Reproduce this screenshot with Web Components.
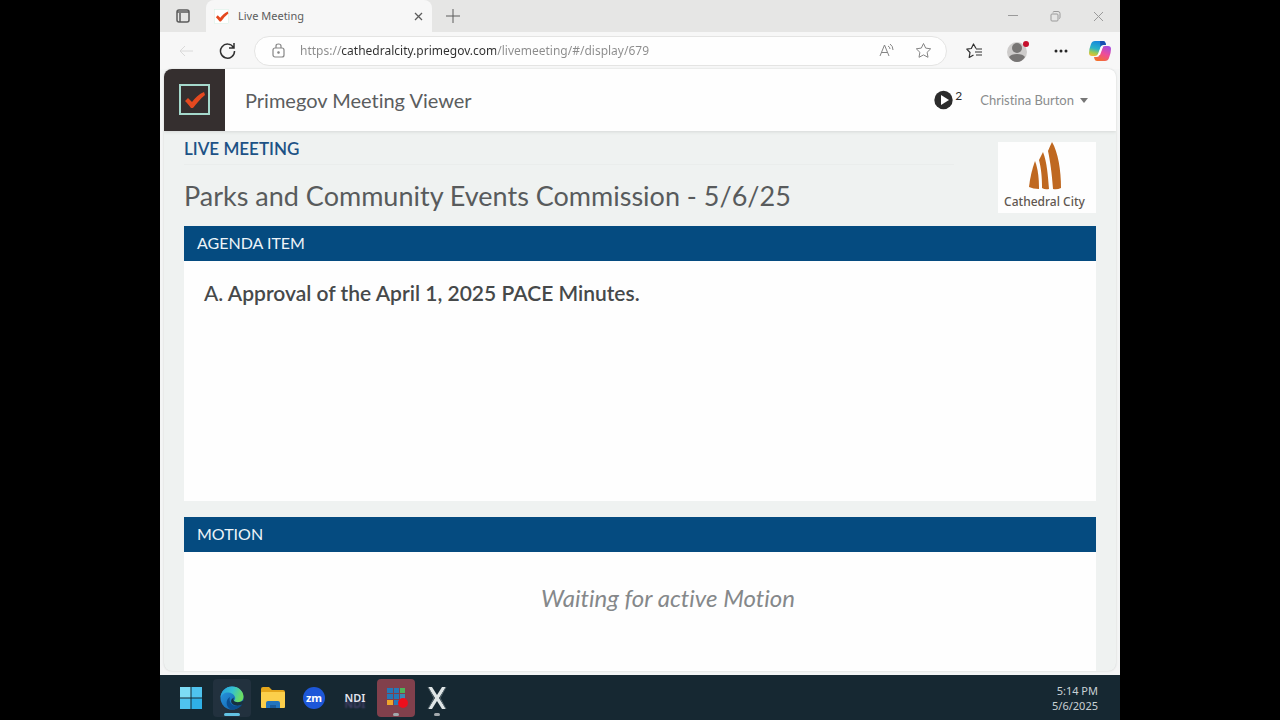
<!DOCTYPE html>
<html lang="en">
<head>
<meta charset="utf-8">
<meta name="viewport" content="width=device-width, initial-scale=1">
<title>Live Meeting</title>
<style>
  html, body { height: 100%; }
  body {
    margin: 0;
    background: #000;
    overflow: hidden;
    --ui: "Noto Sans", "Open Sans", sans-serif;
    --app: Lato, "Open Sans", sans-serif;
    --blue: #054b80;
    font-family: var(--app);
    font-variant-ligatures: none;
  }
</style>
</head>
<body>

<desktop-screen>
  <browser-tabs>Live Meeting</browser-tabs>
  <browser-toolbar url="https://cathedralcity.primegov.com/livemeeting/#/display/679"></browser-toolbar>
  <meeting-viewer>
    <viewer-header slot="header" user="Christina Burton" count="2">Primegov Meeting Viewer</viewer-header>
    <meeting-title label="LIVE MEETING">
      Parks and Community Events Commission - 5/6/25
      <city-logo slot="logo">Cathedral City</city-logo>
    </meeting-title>
    <meeting-panel heading="AGENDA ITEM">
      <agenda-item number="A.">Approval of the April 1, 2025 PACE Minutes.</agenda-item>
    </meeting-panel>
    <meeting-panel heading="MOTION">
      <motion-status>Waiting for active Motion</motion-status>
    </meeting-panel>
  </meeting-viewer>
  <task-bar slot="taskbar" time="5:14 PM" date="5/6/2025">
    <task-app label="Start">
      <svg viewBox="0 0 24 24"><g fill="#4fc3ee"><path d="M1 1h10.500v10.500H1z" fill="#7ddcf5"/><path d="M12.500 1H23v10.500H12.500z"/><path d="M1 12.500h10.500V23H1z"/><path d="M12.500 12.500H23V23H12.500z" fill="#2fb0e6"/></g></svg>
    </task-app>
    <task-app label="Microsoft Edge" state="active">
      <svg viewBox="0 0 24 24">
        <defs>
          <linearGradient id="edge-top" x1="0" y1="0" x2="1" y2="0.300"><stop offset="0" stop-color="#249be0"/><stop offset="0.550" stop-color="#35c1cf"/><stop offset="1" stop-color="#6bdd62"/></linearGradient>
          <linearGradient id="edge-low" x1="0" y1="0" x2="1" y2="1"><stop offset="0" stop-color="#2b9be4"/><stop offset="1" stop-color="#0c59a4"/></linearGradient>
        </defs>
        <circle cx="12" cy="12" r="11.500" fill="url(#edge-low)"/>
        <path d="M.5 12C1 5 6 .5 12 .5c7 0 11.500 5 11.500 10 0 4-3 6-6 6-2.500 0-4-1-3.500-2 1-1 1.500-2 1-3.500C14 8 11 6.500 8 6.500 4.500 6.500 1.500 8.500.5 12z" fill="url(#edge-top)"/>
        <path d="M10 11c-1.500 4 1 8.500 6 9 2.500.2 4.500-.5 6-1.500l-1 1.500c-3 3-7 4-10.500 3.200C6 21 5 14 10 11z" fill="#0b4f91"/>
        <path d="M14 11.500c-.5 1-.8 2-.3 3 1.300 2 5.500 2.500 9 .3l.6 1.200c-.3 1.200-1 2-1.300 2.500-3 1.700-7 1.500-9.500-.5-2-1.600-2-5 1.500-6.500z" fill="#173142"/>
      </svg>
    </task-app>
    <task-app label="File Explorer">
      <svg viewBox="0 0 24 24"><path d="M0 3q0-2 2-2h6l3 3h11q2 0 2 2v4H0z" fill="#e5a61b"/><path d="M0 7q0-1 1-1h22q1 0 1 1v14q0 1-1 1H1q-1 0-1-1z" fill="#fccf4b"/><path d="M5 22v-5q0-2 2-2h10q2 0 2 2v5z" fill="#2374bd"/><path d="M9 19h6v3H9z" fill="#1a5b9c"/></svg>
    </task-app>
    <task-app label="Zoom"><span class="zoom">zm</span></task-app>
    <task-app label="NDI Tools"><span class="ndi">NDI</span></task-app>
    <task-app label="Recorder" state="alert">
      <svg viewBox="0 0 24 24"><g fill="#2678b8"><path d="M3 2h6v5H3zM10 2h5v5h-5zM3 8h6v5H3zM10 8h5v5h-5zM10 14h5v5h-5z"/></g><path d="M16 2h5v5h-5z" fill="#4eb35a"/><path d="M16 8h5v5h-5z" fill="#3b89b5"/><path d="M3 14h6v5H3z" fill="#f0a52c"/><circle cx="19" cy="17" r="5" fill="#ed0f1d"/></svg>
    </task-app>
    <task-app label="X Capture" state="running">
      <svg viewBox="0 0 24 24"><path d="M3 1h4l5 8 5-8h4l-7 11 7 11h-4l-5-8-5 8H3l7-11z" fill="#dfe5e6"/><path d="M3 1l6 11-6 11M21 1l-6 11 6 11" fill="none" stroke="#56666d"/></svg>
    </task-app>
  </task-bar>
</desktop-screen>

<script>
  (function meetingPage() {
    'use strict';

    const define = (name, render) => {
      customElements.define(name, class extends HTMLElement {
        constructor() {
          super();
          this.attachShadow({ mode: 'open' });
        }

        connectedCallback() {
          this.shadowRoot.innerHTML = render(this);
        }
      });
    };

    const buttonReset = `
      button {
        display: grid;
        place-items: center;
        padding: 0;
        border: 0;
        background: none;
        color: inherit;
        font: inherit;
      }
      svg { display: block; fill: none; stroke: currentColor; }
      svg.solid { stroke: none; }
    `;

    const check = `<path d="M3 13l3-3 4 4C13 10 17 6 22 4l1 3c-5 4-8 8-12 13H9c-2-3-4-5-6-7z" fill="#e5491f" stroke="none"/>`;

    define('desktop-screen', () => `
      <style>
        :host {
          display: flex;
          flex-direction: column;
          height: 100vh;
          max-width: 100%;
          aspect-ratio: 4 / 3;
          margin: 0 auto;
          background: #f4f5f5;
          overflow: hidden;
        }
      </style>
      <slot></slot>
      <slot name="taskbar"></slot>
    `);

    define('browser-tabs', () => `
      <style>
        ${buttonReset}
        :host {
          display: flex;
          flex: none;
          height: 32px;
          background: #e6e6e5;
          color: #5c5c5c;
          font: 11px/16px var(--ui);
        }
        .menu { width: 46px; }
        .tab {
          display: flex;
          align-items: center;
          gap: 9px;
          box-sizing: border-box;
          width: 226px;
          padding: 0 6px 0 8px;
          border-radius: 8px 8px 0 0;
          background: #f7f7f7;
        }
        .favicon { background: #fff; }
        .name { flex: 1; }
        .tab button { width: 16px; height: 16px; }
        .new { width: 42px; }
        .window { display: flex; margin-left: auto; color: #9a9a9a; }
        .window button { width: 43px; }
      </style>
      <button class="menu" aria-label="Tab actions"><svg width="14" height="14" stroke-width="1.500"><rect x="1" y="1" width="12" height="12" rx="2"/><path d="M1 3h12M4 4v9"/></svg></button>
      <div class="tab">
        <svg class="favicon" width="15" height="15" viewBox="0 0 24 24"><rect x="1" y="1" width="22" height="22" stroke="#d9f0e6"/>${check}</svg>
        <span class="name"><slot></slot></span>
        <button aria-label="Close tab"><svg width="9" height="9" stroke-width="1.300"><path d="M1 1l7 7M8 1L1 8"/></svg></button>
      </div>
      <button class="new" aria-label="New tab"><svg width="14" height="14"><path d="M7 0v14M0 7h14"/></svg></button>
      <div class="window">
        <button aria-label="Minimize"><svg width="10" height="10"><path d="M0 4.500h10"/></svg></button>
        <button aria-label="Restore"><svg width="11" height="11"><rect x="1" y="3" width="7" height="7" rx="1"/><path d="M3 1.500q0-1 1-1h4q2 0 2 2v4q0 1-1 1"/></svg></button>
        <button aria-label="Close"><svg width="11" height="11"><path d="M1 1l9 9M10 1l-9 9"/></svg></button>
      </div>
    `);

    define('browser-toolbar', (el) => `
      <style>
        ${buttonReset}
        :host {
          display: flex;
          align-items: center;
          flex: none;
          height: 37px;
          background: #f7f7f7;
          color: #303030;
        }
        .back { width: 46px; padding-left: 6px; color: #dadada; }
        .reload { width: 42px; }
        .address {
          display: flex;
          align-items: center;
          flex: 1;
          box-sizing: border-box;
          height: 30px;
          margin-left: 6px;
          padding: 0 4px 0 17px;
          border: 1px solid #e4e4e3;
          border-radius: 15px;
          background: #fefefe;
          color: #858585;
        }
        input {
          flex: 1;
          min-width: 0;
          margin-left: 15px;
          padding: 0;
          border: 0;
          outline: 0;
          font: 12px/20px var(--ui);
          /* host name is darker than the rest of the address */
          background: linear-gradient(90deg, #8b8b8b 41px, #2f2f2f 41px 196px, #8b8b8b 196px);
          background-clip: text;
          -webkit-background-clip: text;
          color: transparent;
        }
        .address button { width: 37px; height: 28px; }
        .actions { display: flex; margin-left: 6px; }
        .actions button { width: 43px; height: 30px; }
        .actions .copilot { width: 35px; margin-right: 3px; }
      </style>
      <button class="back" aria-label="Back" disabled><svg width="14" height="12"><path d="M14 6H1M6 1L1 6l5 5"/></svg></button>
      <button class="reload" aria-label="Reload"><svg width="17" height="17" viewBox="0 0 17 17" stroke-width="1.500"><path d="M14.500 5.500A7 7 0 1 0 15.500 9M15 1v5h-5"/></svg></button>
      <div class="address">
        <svg width="13" height="15" stroke-width="1.200"><rect x="1" y="5" width="11" height="9" rx="2"/><path d="M4 5V3q0-2 2.500-2T9 3v2"/><circle cx="6.500" cy="9.500" r="0.700" fill="currentColor"/></svg>
        <input type="text" aria-label="Address" spellcheck="false" value="${el.getAttribute('url')}">
        <button aria-label="Read aloud"><svg width="16" height="15"><path d="M1 13L5.500 2 10 13M2.500 9.500h6M9 3q2 1 2 3M11 1q3 2 3 6"/></svg></button>
        <button aria-label="Add to favorites"><svg width="17" height="17" viewBox="0 0 17 17"><path d="M8.500 1.500l2.200 4.600 5 .7-3.600 3.500.9 5-4.500-2.400L4 15.300l.9-5L1.300 6.800l5-.7z" stroke-linejoin="round"/></svg></button>
      </div>
      <div class="actions">
        <button aria-label="Favorites"><svg width="17" height="16" viewBox="0 0 17 16" stroke-width="1.200"><path d="M10 5.500L7.500 1 5.300 5.500l-4.500.7L4 9.500 3.200 14.500 7.500 12M10 6h6M9 9h7M10 12h6" stroke-linejoin="round"/></svg></button>
        <button aria-label="Profile"><svg class="solid" width="24" height="24" viewBox="0 0 24 24"><circle cx="11" cy="13" r="10" fill="#cecccb"/><circle cx="11" cy="9" r="5" fill="#777574"/><path d="M3 18q2-3 8-3t8 3q-3 5-8 5t-8-5z" fill="#777574"/><circle cx="20" cy="5" r="3" fill="#c50f2c"/></svg></button>
        <button aria-label="Settings and more"><svg class="solid" width="14" height="4"><g fill="#262626"><circle cx="2" cy="2" r="1.500"/><circle cx="7" cy="2" r="1.500"/><circle cx="12" cy="2" r="1.500"/></g></svg></button>
        <button class="copilot" aria-label="Copilot">
          <svg class="solid" width="22" height="20" viewBox="0 0 22 20">
            <defs>
              <linearGradient id="cool" x1="0.500" y1="0" x2="0.200" y2="1"><stop offset="0" stop-color="#1686dc"/><stop offset="0.500" stop-color="#29b3c7"/><stop offset="0.800" stop-color="#a9cb47"/><stop offset="1" stop-color="#f1b93a"/></linearGradient>
              <linearGradient id="warm" x1="0.800" y1="0" x2="0.300" y2="1"><stop offset="0" stop-color="#a44de0"/><stop offset="0.500" stop-color="#ee4d99"/><stop offset="1" stop-color="#f4702c"/></linearGradient>
            </defs>
            <path d="M6 0h8q2 0 2.500 2L17 4h-3q-2 0-2.500 2L9 13q-1 2-3 2H3q-3 0-3-3 0-4 2-9 1-3 4-3z" fill="url(#cool)"/>
            <path d="M16 20H8q-2 0-2.500-2L5 16h3q2 0 2.500-2L13 7q1-2 3-2h3q3 0 3 3 0 4-2 9-1 3-4 3z" fill="url(#warm)"/>
            <path d="M11 0h3q2 0 2.500 2L17 4h-3q-2 0-2.500 2z" fill="#174fb1"/>
            <path d="M12 6h2l-3 8H9z" fill="#fff"/>
          </svg>
        </button>
      </div>
    `);

    define('meeting-viewer', () => `
      <style>
        :host {
          display: flex;
          flex: 1;
          flex-direction: column;
          min-height: 0;
          margin: 0 4px 4px;
          border-radius: 8px;
          background: #eff2f1;
          box-shadow: 0 0 2px #c9cccb;
          overflow: hidden;
        }
        main {
          display: flex;
          flex: 1;
          flex-direction: column;
          gap: 16px;
          min-height: 0;
          padding: 0 20px;
          overflow: hidden;
        }
      </style>
      <slot name="header"></slot>
      <main><slot></slot></main>
    `);

    define('viewer-header', (el) => `
      <style>
        ${buttonReset}
        :host {
          display: flex;
          align-items: center;
          flex: none;
          height: 62px;
          background: #fefefe;
          box-shadow: 0 1px 3px #d5d8d7;
        }
        .brand {
          display: grid;
          place-items: center;
          width: 61px;
          height: 62px;
          background: #352f2f;
        }
        h1 {
          flex: 1;
          margin: 0 0 0 20px;
          color: #5b5d5e;
          font-size: 20px;
          line-height: 28px;
          font-weight: 400;
        }
        .live { display: flex; align-items: center; gap: 2px; color: #2c2c2c; }
        .live span { align-self: flex-start; font-size: 12px; line-height: 12px; }
        .user {
          display: flex;
          align-items: center;
          gap: 6px;
          margin: 0 28px 0 18px;
          color: #8a8c8d;
          font-size: 13px;
          line-height: 20px;
        }
      </style>
      <a class="brand" href="#" aria-label="Primegov home"><svg width="32" height="32" viewBox="0 0 32 32"><rect x="1" y="1" width="29" height="29" stroke="#a5d9cc" stroke-width="2"/><g transform="translate(3 4)">${check}</g></svg></a>
      <h1><slot></slot></h1>
      <button class="live" aria-label="Live streams">
        <svg class="solid" width="19" height="20" viewBox="0 0 19 20"><circle cx="9.500" cy="10" r="9.200" fill="#2c2c2c"/><path d="M7 5l8 5-8 5z" fill="#fff"/></svg>
        <span>${el.getAttribute('count')}</span>
      </button>
      <button class="user">${el.getAttribute('user')}<svg class="solid" width="8" height="5"><path d="M0 0h8L4 5z" fill="#777"/></svg></button>
    `);

    define('meeting-title', (el) => `
      <style>
        :host {
          display: flex;
          flex: none;
          justify-content: space-between;
          height: 79px;
        }
        .text { flex: 1; margin-right: 44px; }
        .label {
          margin: 8px 0 0;
          color: #1d5286;
          font-size: 17px;
          line-height: 20px;
          font-weight: 600;
        }
        .label::after {
          content: "";
          display: block;
          margin-top: 5px;
          border-top: 1px solid #eaedec;
        }
        h2 {
          margin: 15px 0 0;
          color: #585b5c;
          font-size: 27px;
          line-height: 32px;
          font-weight: 400;
          white-space: nowrap;
        }
      </style>
      <div class="text">
        <p class="label">${el.getAttribute('label')}</p>
        <h2><slot></slot></h2>
      </div>
      <slot name="logo"></slot>
    `);

    define('city-logo', () => `
      <style>
        :host {
          display: flex;
          flex-direction: column;
          align-items: center;
          box-sizing: border-box;
          width: 98px;
          height: 71px;
          margin-top: 11px;
          padding-right: 5px;
          background: #fefefe;
          color: #605750;
          font: 500 12px/20px var(--ui);
          white-space: nowrap;
        }
      </style>
      <svg width="34" height="50" viewBox="0 0 34 50" fill="#bf6820">
        <path d="M24 0c6 10 9 28 9 46q-4 2-8 1C24 32 22 18 20 9q2-5 4-9z"/>
        <path d="M15 10c4 10 5 24 6 37q-4 1-7-1C14 34 13 26 11 18z"/>
        <path d="M7 19c3 8 4 17 4 28q-6 0-10-2C2 36 4 27 7 19z"/>
      </svg>
      <slot></slot>
    `);

    define('meeting-panel', (el) => `
      <style>
        :host { display: block; flex: none; background: #fefefe; }
        h3 {
          margin: 0;
          padding: 7px 13px 8px;
          background: var(--blue);
          color: #edf4f8;
          font-size: 16px;
          line-height: 20px;
          font-weight: 400;
        }
      </style>
      <h3>${el.getAttribute('heading')}</h3>
      <slot></slot>
    `);

    define('agenda-item', (el) => `
      <style>
        :host {
          display: block;
          min-height: 221px;
          padding: 19px 20px 0;
          color: #46494a;
          font-size: 21px;
          line-height: 26px;
          font-weight: 600;
        }
        span { font-weight: 500; }
      </style>
      <span>${el.getAttribute('number')}</span> <slot></slot>
    `);

    define('motion-status', () => `
      <style>
        :host {
          display: block;
          min-height: 120px;
          padding: 31px 0 31px 56px;
          color: #85888a;
          font-size: 24px;
          line-height: 30px;
          font-style: italic;
          text-align: center;
        }
      </style>
      <slot></slot>
    `);

    define('task-bar', (el) => `
      <style>
        :host {
          display: flex;
          align-items: center;
          justify-content: space-between;
          flex: none;
          height: 45px;
          padding: 0 22px 0 12px;
          background: #162832;
          color: #c9d1d5;
          font: 11px/15px var(--ui);
        }
        nav { display: flex; gap: 3px; }
        time { display: block; text-align: right; }
      </style>
      <nav aria-label="Taskbar"><slot></slot></nav>
      <time>${el.getAttribute('time')}<br>${el.getAttribute('date')}</time>
    `);

    define('task-app', (el) => `
      <style>
        ${buttonReset}
        :host { display: block; }
        button {
          position: relative;
          width: 38px;
          height: 38px;
          border-radius: 4px;
        }
        ::slotted(svg) { display: block; width: 24px; height: 24px; }
        ::slotted(.zoom) {
          width: 22px;
          border-radius: 50%;
          background: #1d57d8;
          color: #fff;
          font: 700 11px/22px var(--ui);
          text-align: center;
        }
        ::slotted(.ndi) {
          color: #e3e4ed;
          font: 600 11px/20px var(--ui);
          text-shadow: 0 6px 2px #4a4370;
        }
        :host([state="active"]) button { background: #22313e; }
        :host([state="alert"]) button { background: #81404c; }
        :host([state]) button::after {
          content: "";
          position: absolute;
          bottom: 1px;
          width: 6px;
          height: 3px;
          border-radius: 2px;
          background: #a3a9ad;
        }
        :host([state="active"]) button::after { width: 16px; background: #62c3e4; }
      </style>
      <button aria-label="${el.getAttribute('label')}"><slot></slot></button>
    `);
  })();
</script>
</body>
</html>
